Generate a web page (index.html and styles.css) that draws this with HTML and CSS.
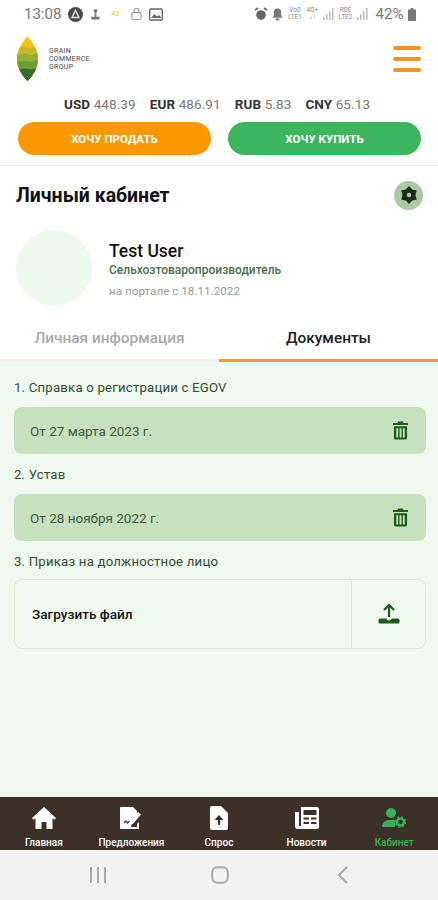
FILE: index.html
```html
<!DOCTYPE html>
<html>
<head>
    <title>Личный кабинет</title>
    <link rel="stylesheet" href="styles.css">
</head>
<body>
    <div class="statusbar">
        <div class="status-left">
            <span class="clock">13:08</span>
            <svg width="15" height="15" viewBox="0 0 15 15"><circle cx="7.500" cy="7.500" r="7.500" fill="#4a4a4a"/><path d="M7.500 3.500L11 10.500H4Z" fill="none" stroke="#ddd" stroke-width="1.500"/></svg>
            <svg width="11" height="13" viewBox="0 0 12 13"><circle cx="6" cy="2.500" r="2" fill="#777"/><path d="M5 4h2v5h4l-1 3H2L1 9h4z" fill="#777"/></svg>
            <span class="tiny-yellow">42</span>
            <svg width="11" height="14" viewBox="0 0 12 14"><rect x="1" y="5.500" width="10" height="7.500" rx="1" fill="none" stroke="#999" stroke-width="1.200"/><path d="M3.500 5.500V3.500a2.500 2.500 0 0 1 5 0v2" fill="none" stroke="#999" stroke-width="1.200"/></svg>
            <svg width="14" height="13" viewBox="0 0 14 13"><rect x="0.700" y="1" width="12.600" height="11" rx="1" fill="none" stroke="#666" stroke-width="1.300"/><path d="M2 10l3.500-4 2.500 2.500 2-1.500 2.500 3z" fill="#666"/></svg>
        </div>
        <div class="status-right">
            <svg width="14" height="14" viewBox="0 0 14 14"><circle cx="7" cy="8" r="4.800" fill="#666"/><path d="M1 3l3-2M13 3l-3-2" stroke="#666" stroke-width="1.600"/></svg>
            <svg width="11" height="14" viewBox="0 0 12 14"><path d="M6 1a4 4 0 0 1 4 4v4l1.500 2H.5L2 9V5a4 4 0 0 1 4-4z" fill="#777"/><rect x="4" y="12" width="4" height="2" fill="#777"/></svg>
            <span class="net">Vo0<br>LTE1</span>
            <span class="net">4G+<br>↓↑</span>
            <svg width="11" height="12" viewBox="0 0 11 12"><path d="M0 12V9h1.500v3zM3 12V6h1.500v6zM6 12V3h1.500v9zM9 12V0h1.500v12z" fill="#bbb"/></svg>
            <span class="net">R0E<br>LTE2</span>
            <svg width="11" height="12" viewBox="0 0 11 12"><path d="M0 12V9h1.500v3zM3 12V6h1.500v6zM6 12V3h1.500v9zM9 12V0h1.500v12z" fill="#bbb"/></svg>
            <span class="batt">42%</span>
            <svg width="8" height="13" viewBox="0 0 8 13"><path d="M2.500 0h3v1.500H8V13H0V1.500h2.500z" fill="#777"/></svg>
        </div>
    </div>

    <header class="top">
        <div class="logo">
            <svg width="21" height="47" viewBox="0 0 22 47">
                <defs>
                    <clipPath id="leaf"><path d="M11 0C17 7 22 15 22 23.500C22 33 17 41 11 47C5 41 0 33 0 23.500C0 15 5 7 11 0Z"/></clipPath>
                </defs>
                <g clip-path="url(#leaf)">
                    <rect width="22" height="47" fill="#f4c514"/>
                    <path d="M0 13l7-2 7 2 8-2v36H0z" fill="#c2bb27"/>
                    <path d="M0 20l8-2 6 2 8-2v29H0z" fill="#94ae2e"/>
                    <path d="M0 27l7-1 8 1 7-2v22H0z" fill="#6c9c34"/>
                    <path d="M0 35l8-1 7 1 7-2v14H0z" fill="#2f6e2c"/>
                </g>
            </svg>
            <div class="logo-text">GRAIN<br>COMMERCE<br>GROUP</div>
        </div>
        <div class="burger"><span></span><span></span><span></span></div>
    </header>

    <div class="rates">
        <span><b>USD</b> 448.39</span>
        <span><b>EUR</b> 486.91</span>
        <span><b>RUB</b> 5.83</span>
        <span><b>CNY</b> 65.13</span>
    </div>

    <div class="actions">
        <button class="btn btn-sell">ХОЧУ ПРОДАТЬ</button>
        <button class="btn btn-buy">ХОЧУ КУПИТЬ</button>
    </div>

    <section class="cabinet">
        <div class="title-row">
            <h1>Личный кабинет</h1>
            <div class="gear">
                <svg width="18" height="18" viewBox="0 0 24 24"><path fill="#1c2a1c" fill-rule="evenodd" d="M12 0l4.250 4.640L22.400 6l-1.900 6 1.900 6-6.150 1.360L12 24l-4.250-4.640L1.600 18l1.900-6-1.900-6 6.150-1.360zM12 9a3 3 0 1 0 0 6 3 3 0 0 0 0-6z"/></svg>
            </div>
        </div>
        <div class="profile">
            <div class="avatar"></div>
            <div class="profile-info">
                <div class="name">Test User</div>
                <div class="role">Сельхозтоваропроизводитель</div>
                <div class="since">на портале с 18.11.2022</div>
            </div>
        </div>
    </section>

    <div class="tabs">
        <div class="tab">Личная информация</div>
        <div class="tab active">Документы</div>
    </div>

    <main class="docs">
        <div class="doc-label">1. Справка о регистрации с EGOV</div>
        <div class="doc-row">
            <span>От 27 марта 2023 г.</span>
            <svg class="trash" width="15" height="19" viewBox="0 0 16 19"><path fill="#1d5c1d" fill-rule="evenodd" d="M5.500 0h5l.8 1.500H16v2H0v-2h4.700zM1 5h14v12.500a1.500 1.500 0 0 1-1.500 1.500h-11A1.500 1.500 0 0 1 1 17.500zM3.500 7v10h2V7zM7 7v10h2V7zM10.500 7v10h2V7z"/></svg>
        </div>
        <div class="doc-label">2. Устав</div>
        <div class="doc-row">
            <span>От 28 ноября 2022 г.</span>
            <svg class="trash" width="15" height="19" viewBox="0 0 16 19"><path fill="#1d5c1d" fill-rule="evenodd" d="M5.500 0h5l.8 1.500H16v2H0v-2h4.700zM1 5h14v12.500a1.500 1.500 0 0 1-1.500 1.500h-11A1.500 1.500 0 0 1 1 17.500zM3.500 7v10h2V7zM7 7v10h2V7zM10.500 7v10h2V7z"/></svg>
        </div>
        <div class="doc-label">3. Приказ на должностное лицо</div>
        <div class="upload">
            <div class="upload-text">Загрузить файл</div>
            <div class="upload-btn">
                <svg width="22" height="22" viewBox="0 0 22 22"><path d="M11 14V2M6 7l5-5 5 5" fill="none" stroke="#1d5c1d" stroke-width="2.200"/><path d="M2 15.500h6.500a2.500 2 0 0 0 5 0H20a1.500 1.500 0 0 1 1.500 1.500v2a1.500 1.500 0 0 1-1.500 1.500H2A1.500 1.500 0 0 1 .5 19v-2A1.500 1.500 0 0 1 2 15.500z" fill="#1d5c1d"/></svg>
            </div>
        </div>
    </main>

    <nav class="bottom-nav">
        <div class="nav-item">
            <svg width="24" height="22" viewBox="0 0 24 22"><path fill="#fff" d="M12 0L0 11l1.500 1.800L3.500 11v11h6v-7h5v7h6V11l2 1.800L24 11z"/></svg>
            <span>Главная</span>
        </div>
        <div class="nav-item">
            <svg width="24" height="24" viewBox="0 0 24 24"><path fill="#fff" d="M2 1h12l4 4v5l-5 6-1 5h6v-3l2-2v6a1 1 0 0 1-1 1H2a1 1 0 0 1-1-1V2a1 1 0 0 1 1-1z"/><path fill="#fff" d="M19 6l3 2.500-8 9.500-3.500 1 .5-3.500z"/><path d="M5 17l2-2 1.500 2 2-2" fill="none" stroke="#3d3029" stroke-width="1.200"/></svg>
            <span>Предложения</span>
        </div>
        <div class="nav-item">
            <svg width="20" height="24" viewBox="0 0 18 24"><path fill="#fff" fill-rule="evenodd" d="M2 0h9l7 7v15a2 2 0 0 1-2 2H2a2 2 0 0 1-2-2V2a2 2 0 0 1 2-2zM9 9l-4.500 5H8v5h2v-5h3.500z"/></svg>
            <span>Спрос</span>
        </div>
        <div class="nav-item">
            <svg width="24" height="22" viewBox="0 0 24 22"><path fill="#fff" fill-rule="evenodd" d="M6 0h16a2 2 0 0 1 2 2v18a2 2 0 0 1-2 2H3a3 3 0 0 1-3-3V5h4v14h2zM8.500 3v5h13V3zM8.500 10.500v2h5.500v-2zM16 10.500v2h5.500v-2zM8.500 15v2h5.500v-2zM16 15v2h5.500v-2z"/></svg>
            <span>Новости</span>
        </div>
        <div class="nav-item active">
            <svg width="24" height="20" viewBox="0 0 24 20"><circle cx="9" cy="5" r="5" fill="#35b158"/><path fill="#35b158" d="M0 19c0-4 3-7 7-7h4c1.500 0 2 .5 2 .5V19z"/><circle cx="18.500" cy="14" r="3.500" fill="none" stroke="#35b158" stroke-width="2.500"/><circle cx="18.500" cy="14" r="5.200" fill="none" stroke="#35b158" stroke-width="1.400" stroke-dasharray="2 2.080"/></svg>
            <span>Кабинет</span>
        </div>
    </nav>

    <div class="android-nav">
        <svg width="16" height="16" viewBox="0 0 16 16"><path d="M1 0v16M8 0v16M15 0v16" stroke="#aaa" stroke-width="2"/></svg>
        <svg width="18" height="18" viewBox="0 0 18 18"><rect x="1.200" y="1.200" width="15.600" height="15.600" rx="5" fill="none" stroke="#aaa" stroke-width="2"/></svg>
        <svg width="11" height="18" viewBox="0 0 11 18"><path d="M10 1L2 9l8 8" fill="none" stroke="#aaa" stroke-width="2"/></svg>
    </div>
</body>
</html>
```

FILE: styles.css
```css
html, body {
    height: 100%;
}
body {
    margin: 0;
    height: 900px;
    overflow: hidden;
    display: flex;
    flex-direction: column;
    background-color: white;
    color: #111;
    font-family: Roboto, 'Noto Sans', sans-serif;
}
.statusbar {
    height: 28px;
    flex: none;
    display: flex;
    justify-content: space-between;
    align-items: center;
    padding: 0 22px 0 24px;
    color: #777;
}
.status-left, .status-right {
    display: flex;
    align-items: center;
    gap: 7px;
}
.status-right {
    gap: 4.600px;
}
.clock {
    font-size: 15px;
}
.tiny-yellow {
    font-size: 7px;
    font-weight: bold;
    color: #e8e82a;
    margin: 0 5px 0 3px;
}
.net {
    font-size: 6.500px;
    line-height: 7px;
    text-align: center;
    color: #888;
}
.batt {
    font-size: 15px;
    margin-left: 3px;
}
.top {
    flex: none;
    height: 47px;
    margin-top: 7px;
    padding: 0 17px;
    display: flex;
    justify-content: space-between;
    align-items: center;
}
.logo {
    display: flex;
    align-items: center;
    gap: 11px;
}
.logo-text {
    font-size: 7px;
    line-height: 8px;
    letter-spacing: 0.3px;
    color: #444;
}
.burger {
    width: 28px;
    display: flex;
    flex-direction: column;
    gap: 7px;
}
.burger span {
    height: 4px;
    border-radius: 2px;
    background-color: #f7941d;
}
.rates {
    flex: none;
    margin-top: 14px;
    height: 16px;
    padding-right: 4px;
    display: flex;
    justify-content: center;
    gap: 14px;
    font-size: 13.500px;
    letter-spacing: 0.1px;
    line-height: 16px;
    color: #777;
}
.rates b {
    color: #333;
}
.actions {
    flex: none;
    margin-top: 10px;
    padding: 0 17px 0 18px;
    display: flex;
    gap: 17px;
}
.btn {
    flex: 1;
    height: 33px;
    border: none;
    border-radius: 17px;
    color: white;
    font-family: Roboto, sans-serif;
    font-size: 11.500px;
    font-weight: bold;
}
.btn-sell {
    background-color: #fb9800;
}
.btn-buy {
    background-color: #3cb55e;
}
.cabinet {
    flex: none;
    margin-top: 10px;
    border-top: 1px solid #e6e6e6;
    padding: 14px 15px 0 16px;
}
.title-row {
    display: flex;
    justify-content: space-between;
    align-items: center;
    height: 30px;
}
h1 {
    margin: 0;
    font-size: 19.500px;
    font-weight: bold;
    color: #111;
}
.gear {
    width: 29px;
    height: 29px;
    border-radius: 50%;
    background-color: #a9c9a4;
    display: flex;
    align-items: center;
    justify-content: center;
}
.profile {
    margin-top: 20px;
    display: flex;
    align-items: flex-start;
    gap: 17px;
}
.avatar {
    width: 76px;
    height: 76px;
    border-radius: 50%;
    background-color: #eff8ee;
}
.profile-info {
    padding-top: 11px;
}
.name {
    font-size: 17.500px;
    font-weight: 500;
    line-height: 20px;
}
.role {
    margin-top: 2px;
    font-size: 12px;
    font-weight: 500;
    line-height: 14px;
    color: #4a6f4a;
}
.since {
    margin-top: 7px;
    font-size: 11.700px;
    line-height: 14px;
    color: #999;
}
.tabs {
    flex: none;
    margin-top: 17px;
    display: flex;
}
.tab {
    width: 219px;
    height: 39px;
    box-sizing: border-box;
    padding-top: 5px;
    text-align: center;
    font-size: 15.400px;
    font-weight: 500;
    line-height: 20px;
    color: #aaa;
    border-bottom: 3px solid #eef3ec;
}
.tab.active {
    color: #222;
    border-bottom-color: #f39a2e;
}
.docs {
    flex: 1;
    padding: 18px 12px 0 14px;
    background-color: #f0f9ef;
}
.doc-label {
    font-size: 13.200px;
    letter-spacing: 0.2px;
    line-height: 16px;
    height: 16px;
    color: #2f4d2f;
}
.doc-row {
    margin: 11px 0 13px;
    height: 47px;
    box-sizing: border-box;
    padding: 0 18px 0 16px;
    border-radius: 8px;
    background-color: #c7e0be;
    display: flex;
    justify-content: space-between;
    align-items: center;
    font-size: 13.500px;
    color: #3c5a3c;
}
.upload {
    margin-top: 9px;
    height: 70px;
    box-sizing: border-box;
    border: 1px solid #d9e8d4;
    border-radius: 8px;
    display: flex;
    align-items: stretch;
}
.upload-text {
    flex: 1;
    padding-left: 17px;
    display: flex;
    align-items: center;
    font-size: 13.600px;
    font-weight: 500;
    color: #111;
}
.upload-btn {
    width: 73px;
    border-left: 1px solid #d9e8d4;
    display: flex;
    align-items: center;
    justify-content: center;
}
.bottom-nav {
    flex: none;
    height: 53px;
    box-sizing: border-box;
    background-color: #3d3029;
    padding: 9px 0 0;
    display: flex;
    overflow: hidden;
}
.nav-item {
    flex: 1;
    display: flex;
    flex-direction: column;
    align-items: center;
    color: white;
    font-size: 10px;
    font-weight: 500;
}
.nav-item svg {
    height: 24px;
}
.nav-item span {
    margin-top: 7px;
}
.nav-item.active {
    color: #35b158;
}
.android-nav {
    flex: none;
    height: 50px;
    box-sizing: border-box;
    background-color: #f2f2f2;
    display: grid;
    grid-template-columns: repeat(3, 1fr);
    justify-items: center;
    align-items: center;
    padding: 0 35px 0 37px;
}
```
